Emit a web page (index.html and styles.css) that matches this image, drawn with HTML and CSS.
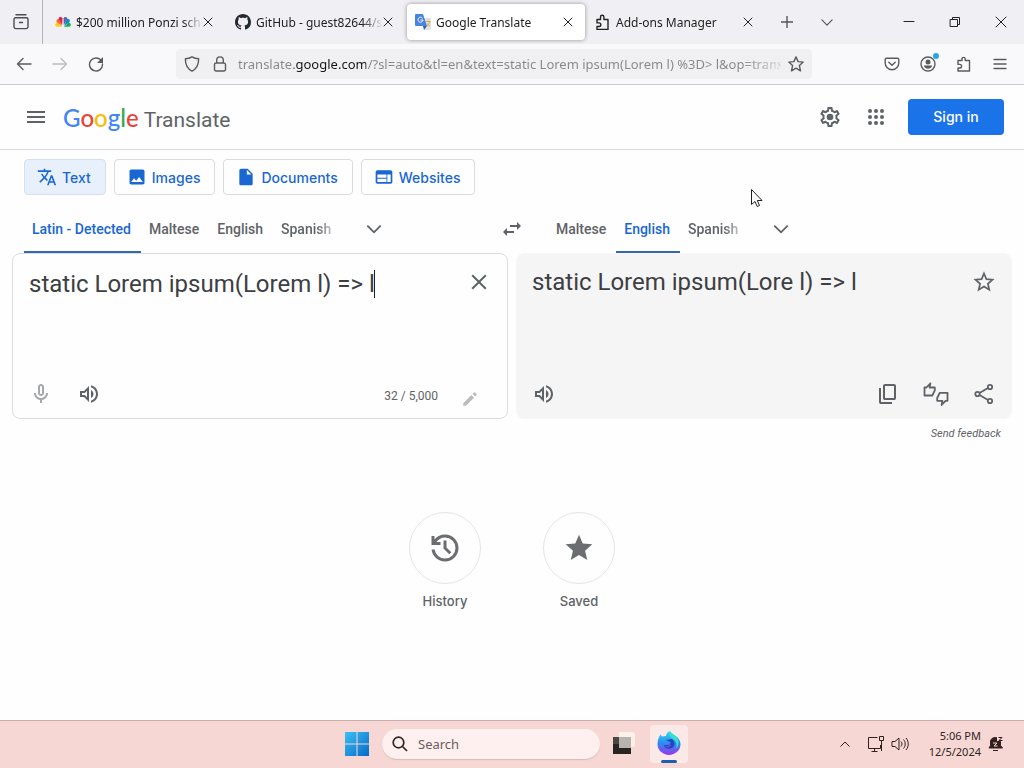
FILE: index.html
```html
<!DOCTYPE html>
<html lang="en">
<head>
    <meta charset="UTF-8">
    <meta name="viewport" content="width=device-width, initial-scale=1.0">
    <title>Google Translate</title>
    <link rel="stylesheet" href="styles.css">
</head>
<body>
    <!-- Browser tabs -->
    <div class="tab-bar">
        <button class="recent-button" aria-label="Recent browsing">
            <svg class="line" width="18" height="18" viewBox="0 0 18 18"><path d="M4 1.8h10M2 6.2a1.4 1.4 0 0 1 1.4-1.4h11.2A1.4 1.4 0 0 1 16 6.2v7.6a1.8 1.8 0 0 1-1.8 1.8H3.800A1.800 1.800 0 0 1 2 13.800zM7.500 9.500h3"/></svg>
        </button>
        <div class="tabs">
            <div class="tab">
                <svg class="favicon" width="16" height="16" viewBox="0 0 16 16"><path fill="#fccc12" d="M7 13 1 12.500C-.5 11 .5 8.500 2.500 8.500z"/><path fill="#f37021" d="M7 12 1.500 8C1 6 2.500 4.500 4.500 5.200z"/><path fill="#e0234c" d="M7.200 11 3.500 5C4 2.500 6.500 2.500 7.500 4.500z"/><path fill="#6460aa" d="M8.800 11 8.500 4.500C9.500 2.500 12 2.500 12.500 5z"/><path fill="#0089d0" d="M9 12 12 5.200C14 4.500 15.500 6 14.500 8z"/><path fill="#0db14b" d="M9 13l4.500-4.500C15.500 8.500 16.500 11 15 12.500z"/></svg>
                <span class="tab-title">$200 million Ponzi sche</span>
                <button class="tab-close" aria-label="Close tab"><svg class="line" width="10" height="10" viewBox="0 0 10 10"><path d="M1 1l8 8M9 1l-8 8"/></svg></button>
            </div>
            <div class="tab">
                <svg class="favicon" width="16" height="16" viewBox="0 0 16 16"><path fill="#24292f" d="M8 0C3.580 0 0 3.580 0 8c0 3.540 2.290 6.530 5.470 7.590.4.070.55-.17.55-.38 0-.19-.01-.82-.01-1.490-2.010.37-2.530-.49-2.690-.94-.09-.23-.48-.94-.82-1.130-.28-.15-.68-.52-.01-.53.63-.01 1.080.58 1.230.82.72 1.210 1.870.87 2.330.66.07-.52.28-.87.51-1.070-1.780-.2-3.640-.89-3.640-3.950 0-.87.31-1.590.82-2.150-.08-.2-.36-1.020.08-2.120 0 0 .67-.21 2.200.82.64-.18 1.320-.27 2-.27s1.360.09 2 .27c1.530-1.040 2.200-.82 2.200-.82.44 1.100.16 1.920.08 2.120.51.56.82 1.270.82 2.150 0 3.070-1.870 3.750-3.650 3.950.29.25.54.73.54 1.480 0 1.070-.01 1.930-.01 2.200 0 .21.15.46.55.38A8.010 8.010 0 0 0 16 8c0-4.420-3.580-8-8-8z"/></svg>
                <span class="tab-title">GitHub - guest82644/s</span>
                <button class="tab-close" aria-label="Close tab"><svg class="line" width="10" height="10" viewBox="0 0 10 10"><path d="M1 1l8 8M9 1l-8 8"/></svg></button>
            </div>
            <div class="tab active">
                <svg class="favicon" width="16" height="16" viewBox="0 0 16 16"><path fill="#dfe3e8" d="M6 4h9a1 1 0 0 1 1 1v10a1 1 0 0 1-1 1H9z"/><path fill="#4a84dc" d="M1 0h7l4 12H1a1 1 0 0 1-1-1V1a1 1 0 0 1 1-1z"/><path fill="#2b5fb8" d="M8 12h4l-3 4z"/><path fill="none" stroke="#fff" d="M7.500 4.200A2.500 2.500 0 1 0 8 6H5.500"/><path fill="none" stroke="#d9a93a" d="M10.500 7.500h5M13 6.500v1M14.500 8c-.5 2-1.500 3.500-3 4.500M12 9.500l3 3"/></svg>
                <span class="tab-title">Google Translate</span>
                <button class="tab-close" aria-label="Close tab"><svg class="line" width="10" height="10" viewBox="0 0 10 10"><path d="M1 1l8 8M9 1l-8 8"/></svg></button>
            </div>
            <div class="tab">
                <svg class="favicon line" width="16" height="16" viewBox="0 0 16 16"><path d="M2 5.500h3.500V3a1.700 1.700 0 0 1 3.400 0v2.500H13v10H2v-3h2a1.800 1.800 0 0 0 0-3.600H2z"/></svg>
                <span class="tab-title">Add-ons Manager</span>
                <button class="tab-close" aria-label="Close tab"><svg class="line" width="10" height="10" viewBox="0 0 10 10"><path d="M1 1l8 8M9 1l-8 8"/></svg></button>
            </div>
        </div>
        <button class="tab-tool" aria-label="New tab"><svg class="line" width="12" height="12" viewBox="0 0 12 12"><path d="M6 0v12M0 6h12"/></svg></button>
        <button class="tab-tool" aria-label="List all tabs"><svg class="line" width="12" height="7" viewBox="0 0 14 8"><path d="M1 1l6 6 6-6"/></svg></button>
        <div class="window-buttons">
            <button aria-label="Minimize"><svg class="line thin" width="12" height="12" viewBox="0 0 12 12"><path d="M1 5.500h10"/></svg></button>
            <button aria-label="Restore"><svg class="line thin" width="12" height="12" viewBox="0 0 12 12"><path d="M1.500 3.500h7v7h-7zM3.500 3.500v-2h7v7h-2"/></svg></button>
            <button aria-label="Close"><svg class="line thin" width="12" height="12" viewBox="0 0 12 12"><path d="M1 1l10 10M11 1L1 11"/></svg></button>
        </div>
    </div>

    <!-- Address bar -->
    <div class="toolbar">
        <button aria-label="Back"><svg class="line" width="16" height="16" viewBox="0 0 16 16"><path d="M15 8H1.500M7 2.500L1.500 8 7 13.500"/></svg></button>
        <button class="faded" aria-label="Forward"><svg class="line" width="16" height="16" viewBox="0 0 16 16"><path d="M1 8h13.500M9 2.500L14.500 8 9 13.500"/></svg></button>
        <button aria-label="Reload"><svg class="line" width="16" height="16" viewBox="0 0 16 16"><path d="M13.800 5.500A6.500 6.500 0 1 0 14.500 8"/><path fill="currentColor" stroke="none" d="M15 1v6H9z"/></svg></button>
        <div class="url-bar">
            <svg class="line" width="16" height="16" viewBox="0 0 16 16"><path d="M8 .8c2 1.300 4.200 1.900 6.600 2 .2 5.600-1.600 9.800-6.600 12.400C3 12.600 1.200 8.400 1.400 2.800 3.800 2.700 6 2.100 8 .8z"/></svg>
            <svg class="line lock" width="14" height="16" viewBox="0 0 14 16"><path d="M1.500 8.500A1.500 1.500 0 0 1 3 7h8a1.500 1.500 0 0 1 1.500 1.500v5A1.500 1.500 0 0 1 11 15H3a1.500 1.500 0 0 1-1.500-1.500zM3.700 7V4.200a3.300 3.300 0 0 1 6.600 0V7"/></svg>
            <input class="url" type="text" aria-label="Address" value="translate.google.com/?sl=auto&amp;tl=en&amp;text=static Lorem ipsum(Lorem l) %3D&gt; l&amp;op=translate">
            <button class="bookmark" aria-label="Bookmark this page"><svg class="line" width="16" height="16" viewBox="0 0 16 16"><path d="M8 .9l2.100 4.700 5.100.5-3.800 3.500 1.100 5.200L8 12.200l-4.500 2.600 1.100-5.200L.8 6.100l5.100-.5z"/></svg></button>
        </div>
        <button aria-label="Pocket"><svg class="line" width="16" height="16" viewBox="0 0 16 16"><path d="M2.500 2.200h11a1.300 1.300 0 0 1 1.300 1.300V7A6.800 6.800 0 0 1 1.200 7V3.500a1.300 1.300 0 0 1 1.300-1.300zM4.800 6.200L8 9.200l3.200-3"/></svg></button>
        <button class="account" aria-label="Account"><svg class="line" width="16" height="16" viewBox="0 0 16 16"><circle cx="8" cy="8" r="7"/><circle cx="8" cy="6" r="2.500" fill="currentColor" stroke="none"/><path fill="currentColor" stroke="none" d="M3.800 9.500h8.400c-.3 2-2 3.200-4.200 3.200s-3.900-1.200-4.200-3.200z"/></svg><span class="account-dot"></span></button>
        <button aria-label="Extensions"><svg class="line" width="16" height="16" viewBox="0 0 16 16"><path d="M2 4.500h4V3a1.600 1.600 0 0 1 3.200 0v1.500h4.300v10.500H2v-3h1.800a1.800 1.800 0 0 0 0-3.600H2z"/></svg></button>
        <button aria-label="Open menu"><svg class="line" width="14" height="12" viewBox="0 0 14 12"><path d="M1 1.500h12M1 6h12M1 10.500h12"/></svg></button>
    </div>

    <header>
        <button class="icon-button" aria-label="Main menu"><svg width="24" height="24" viewBox="0 0 24 24"><path d="M3 6h18v2H3zM3 11h18v2H3zM3 16h18v2H3z"/></svg></button>
        <a class="logo" href="#"><span class="google"><span class="blue">G</span><span class="red">o</span><span class="yellow">o</span><span class="blue">g</span><span class="green">l</span><span class="red">e</span></span><span class="product">Translate</span></a>
        <button class="icon-button" aria-label="Settings"><svg width="24" height="24" viewBox="0 0 24 24"><path d="M19.430 12.980c.04-.32.07-.64.07-.98 0-.34-.03-.66-.07-.98l2.110-1.650c.19-.15.24-.42.12-.64l-2-3.460c-.09-.16-.26-.25-.44-.25-.06 0-.12.01-.17.03l-2.490 1c-.52-.4-1.080-.73-1.690-.98l-.38-2.650C14.460 2.180 14.250 2 14 2h-4c-.25 0-.46.18-.49.42l-.38 2.650c-.61.25-1.170.59-1.690.98l-2.490-1c-.06-.02-.12-.03-.18-.03-.17 0-.34.09-.43.25l-2 3.460c-.13.22-.07.49.12.64l2.110 1.650c-.04.32-.07.65-.07.98 0 .33.03.66.07.98l-2.110 1.650c-.19.15-.24.42-.12.64l2 3.460c.09.16.26.25.44.25.06 0 .12-.01.17-.03l2.490-1c.52.4 1.080.73 1.690.98l.38 2.650c.03.24.24.42.49.42h4c.25 0 .46-.18.49-.42l.38-2.650c.61-.25 1.170-.59 1.690-.98l2.490 1c.06.02.12.03.18.03.17 0 .34-.09.43-.25l2-3.460c.12-.22.07-.49-.12-.64l-2.110-1.650zm-1.980-1.710c.04.31.05.52.05.73 0 .21-.02.43-.05.73l-.14 1.130.89.7 1.080.84-.7 1.210-1.270-.51-1.040-.42-.9.68c-.43.32-.84.56-1.250.73l-1.060.43-.16 1.130-.2 1.350h-1.400l-.19-1.350-.16-1.130-1.060-.43c-.43-.18-.83-.41-1.230-.71l-.91-.7-1.060.43-1.270.51-.7-1.210 1.080-.84.89-.7-.14-1.130c-.03-.31-.05-.54-.05-.74s.02-.43.05-.73l.14-1.130-.89-.7-1.080-.84.7-1.210 1.270.51 1.040.42.9-.68c.43-.32.84-.56 1.250-.73l1.060-.43.16-1.130.2-1.350h1.390l.19 1.350.16 1.130 1.060.43c.43.18.83.41 1.230.71l.91.7 1.060-.43 1.270-.51.7 1.210-1.070.85-.89.7.14 1.130z"/><circle cx="12" cy="12" r="3.300"/></svg></button>
        <button class="icon-button apps" aria-label="Google apps"><svg width="24" height="24" viewBox="0 0 24 24"><circle cx="6" cy="6" r="2"/><circle cx="12" cy="6" r="2"/><circle cx="18" cy="6" r="2"/><circle cx="6" cy="12" r="2"/><circle cx="12" cy="12" r="2"/><circle cx="18" cy="12" r="2"/><circle cx="6" cy="18" r="2"/><circle cx="12" cy="18" r="2"/><circle cx="18" cy="18" r="2"/></svg></button>
        <a class="sign-in" href="#">Sign in</a>
    </header>

    <main>
        <nav class="modes">
            <button class="mode selected"><svg width="20" height="20" viewBox="0 0 24 24"><path d="M12.870 15.070l-2.540-2.510.03-.03c1.740-1.940 2.980-4.170 3.710-6.530H17V4h-7V2H8v2H1v1.990h11.170C11.500 7.920 10.440 9.750 9 11.350 8.070 10.320 7.300 9.190 6.690 8h-2c.73 1.630 1.730 3.170 2.980 4.560l-5.090 5.020L4 19l5-5 3.110 3.110.76-2.040zM18.500 10h-2L12 22h2l1.120-3h4.750L21 22h2l-4.500-12zm-2.620 7l1.620-4.330L19.120 17h-3.240z"/></svg>Text</button>
            <button class="mode"><svg width="20" height="20" viewBox="0 0 24 24"><path d="M21 19V5c0-1.100-.9-2-2-2H5c-1.100 0-2 .9-2 2v14c0 1.100.9 2 2 2h14c1.100 0 2-.9 2-2zM8.500 13.500l2.500 3.010L14.500 12l4.500 6H5l3.500-4.500z"/></svg>Images</button>
            <button class="mode"><svg width="20" height="20" viewBox="0 0 24 24"><path d="M6 2c-1.100 0-1.990.9-1.990 2L4 20c0 1.100.89 2 1.990 2H18c1.100 0 2-.9 2-2V8l-6-6H6zm7 7V3.500L18.500 9H13z"/></svg>Documents</button>
            <button class="mode"><svg width="20" height="20" viewBox="0 0 24 24"><path d="M20 4H4c-1.100 0-1.990.9-1.990 2L2 18c0 1.100.9 2 2 2h16c1.100 0 2-.9 2-2V6c0-1.100-.9-2-2-2zm-5 14H4v-4h11v4zm0-5H4V9h11v4zm5 5h-4V9h4v9z"/></svg>Websites</button>
        </nav>

        <div class="languages">
            <div class="language-list source">
                <button class="language selected">Latin - Detected</button>
                <button class="language">Maltese</button>
                <button class="language">English</button>
                <button class="language cut">Spanish</button>
                <button class="more" aria-label="More source languages"><svg width="24" height="24" viewBox="0 0 24 24"><path d="M5.400 7.600L12 14.200l6.600-6.600L20 9l-8 8-8-8z"/></svg></button>
            </div>
            <button class="swap" aria-label="Swap languages"><svg width="24" height="24" viewBox="0 0 24 24"><path d="M6.990 11L3 15l3.990 4v-3H14v-2H6.990v-3zM21 9l-3.990-4v3H10v2h7.010v3L21 9z"/></svg></button>
            <div class="language-list">
                <button class="language">Maltese</button>
                <button class="language selected">English</button>
                <button class="language cut">Spanish</button>
                <button class="more" aria-label="More target languages"><svg width="24" height="24" viewBox="0 0 24 24"><path d="M5.400 7.600L12 14.200l6.600-6.600L20 9l-8 8-8-8z"/></svg></button>
            </div>
        </div>

        <div class="panels">
            <section class="panel source-panel">
                <div class="panel-top">
                    <div class="source-box">
                        <textarea class="translate-text" aria-label="Source text" spellcheck="false" rows="2">static Lorem ipsum(Lorem l) =&gt; l</textarea>
                        <span class="caret"></span>
                    </div>
                    <button class="icon-button" aria-label="Clear source text"><svg width="24" height="24" viewBox="0 0 24 24"><path d="M19.500 5.900L18.100 4.500 12 10.600 5.900 4.500 4.500 5.900l6.100 6.100-6.100 6.100 1.400 1.400 6.100-6.100 6.100 6.100 1.400-1.400-6.100-6.100z"/></svg></button>
                </div>
                <div class="panel-bottom">
                    <button class="icon-button light" aria-label="Translate by voice"><svg width="24" height="24" viewBox="0 0 24 24"><path d="M12 14c1.660 0 3-1.340 3-3V5c0-1.660-1.340-3-3-3S9 3.340 9 5v6c0 1.660 1.340 3 3 3zm-1-9c0-.55.45-1 1-1s1 .45 1 1v6c0 .55-.45 1-1 1s-1-.45-1-1V5zm6 6c0 2.760-2.240 5-5 5s-5-2.240-5-5H5c0 3.530 2.610 6.430 6 6.920V21h2v-3.080c3.390-.49 6-3.390 6-6.920h-2z"/></svg></button>
                    <button class="icon-button" aria-label="Listen to source text"><svg width="24" height="24" viewBox="0 0 24 24"><path d="M3 9v6h4l5 5V4L7 9H3zm7-.17v6.340L7.830 13H5v-2h2.830L10 8.830zM16.500 12c0-1.770-1.020-3.290-2.500-4.030v8.050c1.480-.73 2.500-2.250 2.500-4.020zM14 3.230v2.060c2.890.86 5 3.540 5 6.710s-2.110 5.850-5 6.710v2.060c4.010-.91 7-4.490 7-8.770s-2.990-7.860-7-8.770z"/></svg></button>
                    <span class="count">32 / 5,000</span>
                    <button class="pencil" aria-label="Handwriting"><svg width="18" height="18" viewBox="0 0 24 24"><path d="M3 17.500V21h3.500L17.300 10.200l-3.500-3.500zM20.700 6.800a1 1 0 0 0 0-1.400l-2.100-2.100a1 1 0 0 0-1.400 0l-1.800 1.800 3.500 3.500z"/></svg></button>
                </div>
            </section>
            <section class="panel target-panel">
                <div class="panel-top">
                    <p class="translate-text">static Lorem ipsum(Lore l) =&gt; l</p>
                    <button class="icon-button" aria-label="Save translation"><svg width="24" height="24" viewBox="0 0 24 24"><path fill="none" stroke="currentColor" stroke-width="1.700" d="M12 3.500l2.400 5.700 6.100.5-4.600 4.100 1.400 6-5.300-3.200-5.300 3.200 1.400-6-4.600-4.100 6.100-.5z"/></svg></button>
                </div>
                <div class="panel-bottom">
                    <button class="icon-button" aria-label="Listen to translation"><svg width="24" height="24" viewBox="0 0 24 24"><path d="M3 9v6h4l5 5V4L7 9H3zm7-.17v6.340L7.830 13H5v-2h2.830L10 8.830zM16.500 12c0-1.770-1.020-3.290-2.500-4.030v8.050c1.480-.73 2.500-2.250 2.500-4.020zM14 3.230v2.060c2.890.86 5 3.540 5 6.710s-2.110 5.850-5 6.710v2.060c4.010-.91 7-4.490 7-8.770s-2.990-7.860-7-8.770z"/></svg></button>
                    <div class="actions">
                        <button class="icon-button" aria-label="Copy translation"><svg width="24" height="24" viewBox="0 0 24 24"><path d="M9 18q-.825 0-1.412-.587T7 16V4q0-.825.588-1.412T9 2h9q.825 0 1.413.588T20 4v12q0 .825-.587 1.413T18 18zm0-2h9V4H9zm-4 6q-.825 0-1.412-.587T3 20V6h2v14h11v2z"/></svg></button>
                        <button class="icon-button" aria-label="Rate this translation"><svg width="28" height="24" viewBox="0 0 28 24"><path fill="none" stroke="currentColor" stroke-width="1.800" stroke-linejoin="round" d="M2.500 5.500v8h7.800l2.500-5.200V5.500H7.600l.8-4.200L4.400 5.500zM25.500 18.800v-8h-7.800l-2.500 5.200v2.800h5.200l-.8 4.200 4-4.200z"/></svg></button>
                        <button class="icon-button" aria-label="Share translation"><svg width="24" height="24" viewBox="0 0 24 24"><g fill="none" stroke="currentColor" stroke-width="1.800"><circle cx="5.500" cy="12" r="2.200"/><circle cx="18" cy="5" r="2.200"/><circle cx="18" cy="19" r="2.200"/><path d="M7.500 11L16 6M7.500 13l8.500 5"/></g></svg></button>
                    </div>
                </div>
            </section>
        </div>
        <div class="feedback"><a href="#">Send feedback</a></div>

        <div class="shortcuts">
            <a class="shortcut" href="#">
                <span class="circle"><svg width="36" height="36" viewBox="0 0 24 24"><path d="M12 21q-3.450 0-6.012-2.287T3.050 13H5.100q.35 2.600 2.313 4.300T12 19q2.925 0 4.963-2.037T19 12t-2.037-4.962T12 5q-1.725 0-3.225.8T6.250 8H9v2H3V4h2v2.350q1.275-1.600 3.113-2.475T12 3q1.875 0 3.513.713t2.850 1.924 1.925 2.850T21 12t-.712 3.513-1.925 2.850-2.850 1.925T12 21m2.800-4.800L11 12.400V7h2v4.600l3.200 3.200z"/></svg></span>
                History
            </a>
            <a class="shortcut" href="#">
                <span class="circle"><svg width="32" height="32" viewBox="0 0 24 24"><path d="M12 17.270L18.180 21l-1.640-7.030L22 9.240l-7.190-.61L12 2 9.190 8.630 2 9.240l5.460 4.730L5.820 21z"/></svg></span>
                Saved
            </a>
        </div>
    </main>

    <!-- Desktop taskbar -->
    <footer>
        <div class="apps-group">
            <button class="start" aria-label="Start"><svg width="24" height="24" viewBox="0 0 24 24"><defs><linearGradient id="win" x1="0" y1="0" x2="24" y2="24" gradientUnits="userSpaceOnUse"><stop offset="0" stop-color="#3cc0f4"/><stop offset="1" stop-color="#0669c8"/></linearGradient></defs><path fill="url(#win)" d="M0 0h11.500v11.500H0zM12.500 0H24v11.500H12.500zM0 12.500h11.500V24H0zM12.500 12.500H24V24H12.500z"/></svg></button>
            <label class="search">
                <svg width="16" height="16" viewBox="0 0 16 16"><circle cx="6.500" cy="6.500" r="5.300"/><path d="M10.500 10.500l4.500 4.500"/></svg>
                <input type="text" placeholder="Search" aria-label="Search">
            </label>
            <button class="task-view" aria-label="Task view"><svg width="24" height="24" viewBox="0 0 24 24"><path fill="#f9f1ea" d="M8 0h13a3 3 0 0 1 3 3v9a3 3 0 0 1-3 3H8z"/><path fill="#292322" d="M2 5h18v17H2z"/><path fill="#b9b2af" d="M8 5h12v11H8z"/><path fill="#4b4542" d="M2 5h6v7H2z"/></svg></button>
            <button class="firefox" aria-label="Firefox"><svg width="24" height="24" viewBox="0 0 24 24"><defs><linearGradient id="fox" x1="0" y1="0" x2="0" y2="1"><stop offset="0" stop-color="#35dcec"/><stop offset=".5" stop-color="#2c8cf2"/><stop offset="1" stop-color="#9a35ee"/></linearGradient></defs><path fill="url(#fox)" d="M12.500 0c1 2.400 3 3 5 4.300 3.500 2.200 6 5 6 9A11.500 10.700 0 0 1 .5 13.300c0-4 1-7 3-9.800L5 5.500 9 5c0-2 1.500-4 3.500-5z"/><path fill="#32e2d2" d="M13 0c1 3 8 4 8.500 11 .3 3-1 5.500-3 7.300C22 12 17 8 14 6.500 12 5 12 2 13 0z"/><path fill="#2446b8" d="M9 9l6-1c3 2 3.500 7 0 9-3.500 1.800-8 0-8-3l5 0 2-2.500z"/><path fill="#7b4ce6" d="M7 14c2 2 5 1 7-1 0 3-4 5-7 1z"/></svg></button>
        </div>
        <div class="tray">
            <svg width="12" height="8" viewBox="0 0 12 8"><path d="M1.500 6.500L6 2l4.500 4.500"/></svg>
            <svg class="network" width="18" height="18" viewBox="0 0 18 18"><path d="M10.500 2.500h-9v11h12V10M4.500 16.500h6M7.500 13.500v3M12.500 1.500h4v4h-4zM14.500 5.500V16"/></svg>
            <svg width="18" height="16" viewBox="0 0 18 16"><path d="M1 5.500h3L8 2v12l-4-3.500H1zM10 5.500c1.300 1.500 1.300 3.500 0 5M12.500 3.500c2.300 2.800 2.300 6.200 0 9M15 2c3 3.500 3 8.500 0 12"/></svg>
            <time class="clock">5:06 PM<br>12/5/2024</time>
            <svg width="16" height="16" viewBox="0 0 16 16"><path fill="#321f1e" d="M1 12l1.500-2.500V6c0-3 2-4.500 5-4.500h1v4h4v4L14.500 12z"/><path d="M5 14.500h5M10.500 1.500H14l-3 3h3.500"/><path stroke="#f5d7d3" d="M5 7h4l-3 3h3.500"/></svg>
        </div>
    </footer>

    <svg class="pointer" width="13" height="20" viewBox="0 0 13 20"><path fill="#fff" stroke="#222" d="M1.500 1.500v15l3.500-3 2.200 5 2.300-1-2.200-5H12z"/></svg>
</body>
</html>
```
FILE: styles.css
```css
* {
    margin: 0;
    padding: 0;
    box-sizing: border-box;
}

body {
    font-family: Roboto, "Liberation Sans", sans-serif;
    color: #3c4043;
    background-color: #fefefe;
    display: flex;
    flex-direction: column;
    min-height: 100vh;
}

button {
    background: none;
    border: none;
    color: inherit;
    font-family: inherit;
    cursor: pointer;
}

a {
    color: inherit;
    text-decoration: none;
}

svg {
    display: block;
    fill: currentColor;
    flex-shrink: 0;
}

.line {
    fill: none;
    stroke: currentColor;
    stroke-width: 1.4;
    stroke-linejoin: round;
    stroke-linecap: round;
}

.thin {
    stroke-width: 1;
}

/* Browser tabs */
.tab-bar {
    display: flex;
    align-items: center;
    height: 44px;
    background-color: #f0f0f4;
    color: #222;
    font-family: "Noto Sans", sans-serif;
}

.recent-button {
    display: flex;
    align-items: center;
    justify-content: center;
    width: 43px;
    height: 44px;
    border-right: 1px solid #b6b6ba;
    color: #4c4c54;
}

.tabs {
    display: flex;
    gap: 2px;
    flex: 0 1 724px;
    min-width: 0;
    padding: 0 2px 0 4px;
}

.tab {
    display: flex;
    flex: 1;
    align-items: center;
    min-width: 0;
    height: 36px;
    padding: 0 8px;
    border-radius: 4px;
}

.tab.active {
    background-color: #fff;
    box-shadow: 0 0 4px rgba(0, 0, 0, 0.4);
}

.favicon {
    margin-right: 5px;
}

.tab-title {
    flex: 1;
    overflow: hidden;
    white-space: nowrap;
    font-size: 12px;
    -webkit-mask-image: linear-gradient(to left, transparent, #000 20px);
    mask-image: linear-gradient(to left, transparent, #000 20px);
}

.tab-close {
    display: flex;
    align-items: center;
    justify-content: flex-end;
    width: 10px;
    height: 24px;
    margin-right: 4px;
}

.tab-close svg {
    stroke-width: 1;
}

.tab-tool {
    display: flex;
    align-items: center;
    justify-content: center;
    width: 40px;
    height: 36px;
    color: #55555c;
}

.window-buttons {
    display: flex;
    margin-left: auto;
}

.window-buttons button {
    display: flex;
    align-items: center;
    justify-content: center;
    width: 46px;
    height: 44px;
}

/* Address bar */
.toolbar {
    display: flex;
    align-items: center;
    height: 41px;
    padding: 0 6px;
    background-color: #f9f9fb;
    border-bottom: 1px solid #c9c9cc;
    color: #5a5a60;
}

.toolbar > button {
    display: flex;
    align-items: center;
    justify-content: center;
    width: 36px;
    height: 32px;
}

.toolbar .faded {
    color: #bcbcc0;
}

.url-bar {
    display: flex;
    align-items: center;
    flex: 1;
    min-width: 0;
    height: 30px;
    margin: 0 62px;
    padding: 0 8px;
    border-radius: 4px;
    background-color: #f0f0f2;
}

.lock {
    margin: 0 11px 0 13px;
}

/* the host name is darker than the rest, and the end fades out */
.url {
    flex: 1;
    min-width: 0;
    height: 24px;
    border: none;
    outline: none;
    font-family: "Noto Sans", sans-serif;
    font-size: 13px;
    color: transparent;
    background-image: linear-gradient(to left, #f0f0f2, rgba(240, 240, 242, 0) 40px), linear-gradient(to right, #86868b 56px, #15141a 56px, #15141a 128px, #86868b 128px);
    -webkit-background-clip: text;
    background-clip: text;
}

.bookmark {
    margin-left: 7px;
}

.account {
    position: relative;
}

.account-dot {
    position: absolute;
    top: 5px;
    right: 7px;
    width: 6px;
    height: 6px;
    border-radius: 50%;
    background-color: #26a5e4;
}

/* Page header */
header {
    display: flex;
    align-items: center;
    height: 65px;
    padding: 0 20px 0 12px;
    border-bottom: 1px solid #dadce0;
}

.icon-button {
    display: flex;
    align-items: center;
    justify-content: center;
    width: 48px;
    height: 48px;
    color: #5f6368;
}

.logo {
    display: flex;
    align-items: baseline;
    margin: 0 auto 0 3px;
    color: #5f6368;
    font-size: 21px;
}

.google {
    margin-right: 5px;
    font-family: Lato, sans-serif;
    font-size: 24px;
    font-weight: 500;
}

.blue {
    color: #4285f4;
}

.red {
    color: #ea4335;
}

.yellow {
    color: #fbbc04;
}

.green {
    color: #34a853;
}

.apps {
    width: 44px;
}

.sign-in {
    min-width: 96px;
    margin-left: 10px;
    border-radius: 4px;
    background-color: #1a73e8;
    color: #fff;
    font-family: Inter, sans-serif;
    font-size: 14px;
    font-weight: 500;
    line-height: 36px;
    text-align: center;
}

main {
    flex: 1;
}

/* Text, images, documents, websites */
.modes {
    display: flex;
    gap: 8px;
    padding: 9px 24px;
}

.mode {
    display: flex;
    align-items: center;
    gap: 5px;
    height: 36px;
    padding: 0 14px 0 12px;
    border: 1px solid #dadce0;
    border-radius: 4px;
    color: #1967d2;
    font-family: Inter, sans-serif;
    font-size: 14px;
    font-weight: 500;
}

.mode.selected {
    background-color: #e8f0fb;
    border-color: #d2e0f5;
}

.languages {
    display: grid;
    grid-template-columns: 1fr 48px 1fr;
    height: 49px;
}

.language-list {
    display: flex;
    align-items: stretch;
    padding-left: 12px;
}

.language-list.source {
    padding-left: 24px;
}

.language {
    padding: 2px 10px 0 8px;
    border-bottom: 2px solid transparent;
    color: #5f6368;
    font-size: 14px;
    font-weight: 500;
}

.language.selected {
    color: #1967d2;
    border-color: #3468ae;
}

.language.cut {
    -webkit-mask-image: linear-gradient(to left, transparent, #000 24px);
    mask-image: linear-gradient(to left, transparent, #000 24px);
}

.more {
    margin-left: 22px;
    color: #5f6368;
}

.more svg {
    width: 22px;
}

.swap {
    display: flex;
    align-items: center;
    justify-content: center;
    color: #5f6368;
}

/* Source and translation */
.panels {
    display: flex;
    gap: 8px;
    padding: 0 12px;
}

.panel {
    display: flex;
    flex: 1;
    flex-direction: column;
    justify-content: space-between;
    min-width: 0;
    min-height: 166px;
    border: 1px solid #dadce0;
    border-radius: 8px;
}

.target-panel {
    background-color: #f5f5f5;
    border-color: #f7f7f7;
}

.panel-top {
    display: flex;
    padding: 4px 4px 0 16px;
}

.target-panel .panel-top {
    padding: 4px 3px 0 15px;
}

.source-box {
    position: relative;
    flex: 1;
}

.translate-text {
    display: block;
    flex: 1;
    width: 100%;
    padding-top: 8px;
    border: none;
    outline: none;
    resize: none;
    background: none;
    color: #3c4043;
    font-family: Roboto, sans-serif;
    font-size: 24px;
    line-height: 32px;
}

.source-box .translate-text {
    padding-top: 10px;
}

.caret {
    position: absolute;
    top: 12px;
    left: 345px;
    width: 1px;
    height: 28px;
    background-color: #222;
}

.panel-bottom {
    display: flex;
    align-items: center;
    padding: 0 4px;
}

.light {
    color: #a5a8ab;
}

.count {
    margin-left: auto;
    padding-top: 3px;
    color: #5f6368;
    font-size: 12px;
}

.pencil {
    margin: 10px 24px 0 23px;
    color: #b9bbbd;
}

.target-panel .panel-bottom {
    padding: 0 3px;
}

.actions {
    display: flex;
    margin-left: auto;
}

.feedback {
    padding: 8px 23px 0;
    text-align: right;
    color: #5f6368;
    font-size: 11px;
    font-style: italic;
    line-height: 13px;
}

.shortcuts {
    display: flex;
    justify-content: center;
    gap: 62px;
    padding: 72px 0 24px;
}

.shortcut {
    width: 72px;
    color: #5f6368;
    font-family: Inter, sans-serif;
    font-size: 13px;
    font-weight: 500;
    line-height: 18px;
    text-align: center;
}

.circle {
    display: flex;
    align-items: center;
    justify-content: center;
    height: 72px;
    margin-bottom: 8px;
    border: 1px solid #e4e5e7;
    border-radius: 50%;
    color: #6b6d70;
}

/* Desktop taskbar */
footer {
    display: grid;
    grid-template-columns: 1fr auto 1fr;
    height: 48px;
    padding-bottom: 1px;
    border-top: 1px solid #c9aead;
    background-color: #f6d7d4;
    color: #321f1e;
    font-family: "Noto Sans", sans-serif;
}

.apps-group {
    display: flex;
    grid-column: 2;
    align-items: center;
}

.start {
    display: flex;
    justify-content: center;
    width: 42px;
}

.search {
    display: flex;
    align-items: center;
    width: 218px;
    height: 30px;
    margin: 0 4px;
    padding: 0 10px;
    border-radius: 15px;
    background-color: #fdf0ef;
    box-shadow: 0 1px 1px #dcbab8;
}

.search svg {
    fill: none;
    stroke: #302626;
    stroke-width: 1.7;
}

.search input {
    width: 100%;
    margin-left: 10px;
    border: none;
    outline: none;
    background: none;
    font-family: inherit;
    font-size: 13px;
}

.search input::placeholder {
    color: #6d5c5b;
}

.task-view {
    display: flex;
    justify-content: center;
    width: 38px;
    margin-right: 8px;
}

.firefox {
    display: flex;
    flex-direction: column;
    align-items: center;
    justify-content: space-between;
    width: 38px;
    height: 38px;
    padding-top: 6px;
    border-radius: 4px;
    background-color: #fbe9e8;
}

.firefox::after {
    content: "";
    width: 16px;
    height: 3px;
    border-radius: 2px;
    background-color: #1b5fae;
}

.tray {
    display: flex;
    align-items: center;
    justify-content: flex-end;
    padding-right: 20px;
}

.tray svg {
    fill: none;
    stroke: #321f1e;
}

.tray .network {
    margin: 0 6px 0 16px;
}

.clock {
    margin: 0 7px 0 12px;
    min-width: 60px;
    font-size: 11px;
    line-height: 16px;
    text-align: right;
}

.pointer {
    position: absolute;
    top: 188px;
    left: 750px;
}
```
